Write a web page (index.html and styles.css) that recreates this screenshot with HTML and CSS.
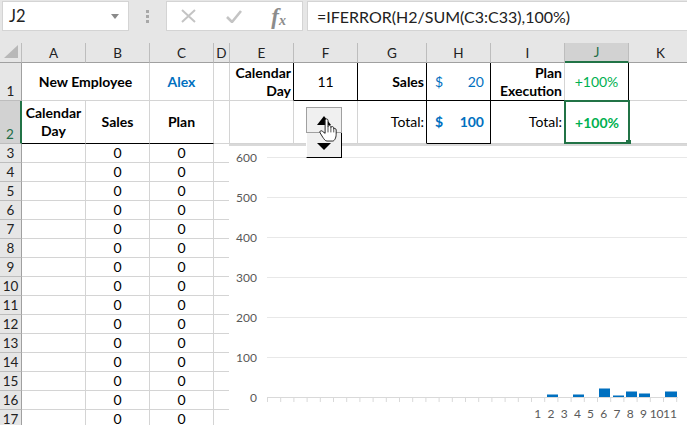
FILE: index.html
```html
<!DOCTYPE html>
<html lang="en">
<head>
<meta charset="utf-8">
<title>Sheet</title>
<link rel="stylesheet" href="styles.css">
</head>
<body>
<div class="app">
  <div class="fbar">
    <div class="namebox"><span>J2</span>
      <svg class="caret" width="8" height="5" viewBox="0 0 8 5"><path d="M0 0h8L4 5z" fill="#8a8a8a"/></svg>
    </div>
    <div class="grip"><i></i><i></i><i></i></div>
    <div class="fbtns">
      <svg width="15" height="14" viewBox="0 0 15 14"><path d="M1 1l13 12M14 1L1 13" stroke="#c4c4c4" stroke-width="2" fill="none"/></svg>
      <svg width="16" height="14" viewBox="0 0 16 14"><path d="M1 8l5 5L15 2" stroke="#c4c4c4" stroke-width="2.6" fill="none"/></svg>
      <span class="fx">f<sub>x</sub></span>
    </div>
    <div class="finput">=IFERROR(H2/SUM(C3:C33),100%)</div>
  </div>
  <div class="sheet">
    <div class="row hdr">
      <div class="corner"><svg width="14" height="13" viewBox="0 0 14 13"><path d="M14 0v13H0z" fill="#b8b8b8"/></svg></div>
      <div class="ch">A</div><div class="ch">B</div><div class="ch">C</div><div class="ch">D</div><div class="ch">E</div><div class="ch">F</div><div class="ch">G</div><div class="ch">H</div><div class="ch">I</div><div class="ch sel">J</div><div class="ch">K</div>
    </div>
    <div class="row r1">
      <div class="rh">1</div>
      <div class="c b mid span2">New Employee</div>
      <div class="c b mid blue">Alex</div>
      <div class="c"></div>
      <div class="c b right wrap rk">Calendar<br>Day</div>
      <div class="c mid bb">11</div>
      <div class="c b right mid bb rk lk">Sales</div>
      <div class="c money blue bb rk"><span>$</span><span>20</span></div>
      <div class="c b right wrap bb">Plan<br>Execution</div>
      <div class="c mid green bb rk">+100%</div>
      <div class="c"></div>
    </div>
    <div class="row r2">
      <div class="rh sel">2</div>
      <div class="c b mid wrap bb">Calendar<br>Day</div>
      <div class="c b mid bb">Sales</div>
      <div class="c b mid bb">Plan</div>
      <div class="c"></div>
      <div class="c"></div>
      <div class="c"></div>
      <div class="c right mid rk">Total:</div>
      <div class="c money blue b bb rk"><span>$</span><span>100</span></div>
      <div class="c right mid">Total:</div>
      <div class="c mid green b active">+100%</div>
      <div class="c"></div>
    </div>
    <div class="row"><div class="rh">3</div><div class="c"></div><div class="c z">0</div><div class="c z">0</div><div class="c"></div></div>
    <div class="row"><div class="rh">4</div><div class="c"></div><div class="c z">0</div><div class="c z">0</div><div class="c"></div></div>
    <div class="row"><div class="rh">5</div><div class="c"></div><div class="c z">0</div><div class="c z">0</div><div class="c"></div></div>
    <div class="row"><div class="rh">6</div><div class="c"></div><div class="c z">0</div><div class="c z">0</div><div class="c"></div></div>
    <div class="row"><div class="rh">7</div><div class="c"></div><div class="c z">0</div><div class="c z">0</div><div class="c"></div></div>
    <div class="row"><div class="rh">8</div><div class="c"></div><div class="c z">0</div><div class="c z">0</div><div class="c"></div></div>
    <div class="row"><div class="rh">9</div><div class="c"></div><div class="c z">0</div><div class="c z">0</div><div class="c"></div></div>
    <div class="row"><div class="rh">10</div><div class="c"></div><div class="c z">0</div><div class="c z">0</div><div class="c"></div></div>
    <div class="row"><div class="rh">11</div><div class="c"></div><div class="c z">0</div><div class="c z">0</div><div class="c"></div></div>
    <div class="row"><div class="rh">12</div><div class="c"></div><div class="c z">0</div><div class="c z">0</div><div class="c"></div></div>
    <div class="row"><div class="rh">13</div><div class="c"></div><div class="c z">0</div><div class="c z">0</div><div class="c"></div></div>
    <div class="row"><div class="rh">14</div><div class="c"></div><div class="c z">0</div><div class="c z">0</div><div class="c"></div></div>
    <div class="row"><div class="rh">15</div><div class="c"></div><div class="c z">0</div><div class="c z">0</div><div class="c"></div></div>
    <div class="row"><div class="rh">16</div><div class="c"></div><div class="c z">0</div><div class="c z">0</div><div class="c"></div></div>
    <div class="row"><div class="rh">17</div><div class="c"></div><div class="c z">0</div><div class="c z">0</div><div class="c"></div></div>

    <svg class="chart" width="458" height="281" viewBox="229 144 458 281">
      <rect x="229" y="144" width="458" height="2" fill="#d9d9d9"/>
      <g stroke="#e8e8e8" stroke-width="1">
        <path d="M267 157.500H687M267 197.500H687M267 237.500H687M267 277.500H687M267 317.500H687M267 357.500H687"/>
      </g>
      <path d="M267 397.500H678M267.500 397v5M280.700 397v5M293.900 397v5M307.100 397v5M320.300 397v5M333.500 397v5M346.700 397v5M359.900 397v5M373.100 397v5M386.300 397v5M399.500 397v5M412.700 397v5M425.900 397v5M439.100 397v5M452.300 397v5M465.500 397v5M478.700 397v5M491.900 397v5M505.100 397v5M518.300 397v5M531.500 397v5M544.700 397v5M557.900 397v5M571.100 397v5M584.300 397v5M597.500 397v5M610.700 397v5M623.900 397v5M637.100 397v5M650.300 397v5M663.500 397v5M676.700 397v5" stroke="#d9d9d9" fill="none"/>
      <g fill="#0070c0">
        <rect x="547" y="395" width="11" height="2"/>
        <rect x="573" y="395" width="11" height="2"/>
        <rect x="599" y="389" width="11" height="8"/>
        <rect x="613" y="396" width="11" height="1"/>
        <rect x="626" y="392" width="11" height="5"/>
        <rect x="639" y="394" width="11" height="3"/>
        <rect x="665" y="392" width="12" height="5"/>
      </g>
      <g fill="#7fb6dd">
        <rect x="547" y="394" width="11" height="1"/>
        <rect x="573" y="394" width="11" height="1"/>
        <rect x="599" y="388" width="11" height="1"/>
        <rect x="613" y="395" width="11" height="1"/>
        <rect x="626" y="391" width="11" height="1"/>
        <rect x="639" y="393" width="11" height="1"/>
        <rect x="665" y="391" width="12" height="1"/>
      </g>
      <g class="ytick" text-anchor="end">
        <text x="257" y="162">600</text><text x="257" y="202">500</text><text x="257" y="242">400</text><text x="257" y="282">300</text><text x="257" y="322">200</text><text x="257" y="362">100</text><text x="257" y="402">0</text>
      </g>
      <g class="ytick" text-anchor="middle">
        <text x="537.700" y="418">1</text><text x="551" y="418">2</text><text x="564.200" y="418">3</text><text x="577.400" y="418">4</text><text x="590.600" y="418">5</text><text x="603.800" y="418">6</text><text x="617" y="418">7</text><text x="630.200" y="418">8</text><text x="643.400" y="418">9</text><text x="656.600" y="418">10</text><text x="670" y="418">11</text>
      </g>
    </svg>

    <div class="spinner">
      <div class="spin up"><svg width="14" height="9" viewBox="0 0 14 9"><path d="M7 0l7 9H0z" fill="#000"/></svg></div>
      <div class="spin down"><svg width="14" height="7" viewBox="0 0 14 7"><path d="M0 0h14L7 7z" fill="#000"/></svg></div>
    </div>
    <svg class="hand" width="18" height="24" viewBox="0 0 18 25">
      <path d="M6 2.500c0-2 3-2 3 0V9c0-1.500 3-1.500 3 0v1c0-1.500 3-1.500 3 .5v1c0-1 2.500-1 2.500 1V17c0 4-2 7-3.500 7H8c-2 0-3-2-4.500-4L.8 15.500c-1-1.500.7-3 2.200-1.800L6 16z" fill="#fff" stroke="#222" stroke-width="1"/>
      <path d="M9 9v6M12 10v5M15 11v4" stroke="#222" stroke-width=".8" fill="none"/>
    </svg>
  </div>
</div>
</body>
</html>
```
FILE: styles.css
```css
* { box-sizing: border-box; }
html, body { margin: 0; padding: 0; }
body { width: 687px; height: 425px; overflow: hidden; background: #fff; font-family: "Lato", "Liberation Sans", sans-serif; font-size: 14px; color: #000; }
.app { width: 687px; height: 425px; overflow: hidden; display: flex; flex-direction: column; }

.fbar { height: 43px; flex: none; background: #e6e6e6; display: flex; align-items: flex-start; padding: 1px 0 0 2px; }
.namebox { width: 127px; height: 30px; background: #fff; border: 1px solid #d4d4d4; display: flex; align-items: center; justify-content: space-between; padding: 0 9px 0 6px; font-size: 16.500px; color: #222; }
.grip { width: 37px; height: 30px; display: flex; flex-direction: column; align-items: center; justify-content: center; gap: 2px; }
.grip i { display: block; width: 3px; height: 3px; background: #a8a8a8; }
.fbtns { width: 137px; height: 30px; background: #fff; border: 1px solid #d4d4d4; display: flex; align-items: center; justify-content: space-between; padding: 0 16px 0 14px; }
.fx { font-family: "Liberation Serif", serif; font-style: italic; font-weight: 700; font-size: 23px; color: #8c8c8c; line-height: 1; }
.fx sub { font-size: 14px; vertical-align: -1px; line-height: 0; }
.finput { flex: 1; height: 30px; margin-left: 4px; background: #fff; border: 1px solid #d4d4d4; border-right: 0; display: flex; align-items: center; padding-left: 9px; font-size: 16px; color: #222; white-space: nowrap; }

.sheet { position: relative; flex: 1; overflow: hidden; }
.row { display: grid; grid-template-columns: 22px 64px 64px 64px 16px 64px 64px 69px 64px 74px 64px 64px; height: 19px; width: 713px; }
.row.hdr { height: 20px; }
.row.r1 { height: 38px; }
.row.r2 { height: 43px; }

.corner { background: #e6e6e6; border-bottom: 1px solid #a0a0a0; border-right: 1px solid #bdbdbd; display: flex; align-items: flex-end; justify-content: flex-end; padding: 0 3px 4px 0; }
.ch { background: #e6e6e6; border-bottom: 1px solid #a0a0a0; border-right: 1px solid #bdbdbd; display: flex; align-items: center; justify-content: center; font-size: 13.500px; color: #222; }
.ch.sel { background: #d2d2d2; color: #1f6d46; border-bottom: 2px solid #217346; }
.rh { background: #e6e6e6; border-right: 1px solid #a0a0a0; border-bottom: 1px solid #bdbdbd; display: flex; align-items: flex-end; justify-content: center; font-size: 13.500px; line-height: 17px; color: #222; }
.rh.sel { background: #d2d2d2; color: #1f6d46; border-right: 2px solid #217346; }

.c { border-right: 1px solid #d4d4d4; border-bottom: 1px solid #d4d4d4; display: flex; align-items: flex-end; line-height: 18px; min-width: 0; white-space: nowrap; }
.z { justify-content: center; }
.b { font-weight: 700; }
.mid { align-items: center; justify-content: center; text-align: center; }
.right { justify-content: flex-end; text-align: right; padding-right: 2px; }
.right.mid { justify-content: flex-end; }
.wrap { align-items: center; }
.span2 { grid-column: span 2; }
.blue { color: #0070c0; }
.green { color: #00b050; }
.bb { border-bottom-color: #000; }
.rk { border-right-color: #000; }
.lk { box-shadow: -1px 0 0 #000; }
.money { align-items: center; justify-content: space-between; padding: 0 6px 0 8px; }
.active { border: 0; position: relative; }
.active::before { content: ""; position: absolute; left: -1px; right: -1px; top: -1px; bottom: 0; border: 2px solid #217346; }
.active::after { content: ""; position: absolute; right: -2px; bottom: 0; width: 5px; height: 4px; background: #217346; }

.chart { position: absolute; left: 229px; top: 101px; background: #fff; }
.ytick text { font-size: 12px; fill: #595959; font-family: "Lato", "Liberation Sans", sans-serif; }

.spinner { position: absolute; left: 306px; top: 64px; width: 36px; display: flex; flex-direction: column; }
.spin { height: 26px; background: #f0f0f0; display: flex; align-items: center; justify-content: center; }
.spin.up { border: 1px solid #a0a0a0; }
.spin.down { height: 25px; padding-top: 2px; border-right: 1px solid #000; border-bottom: 1px solid #000; border-left: 1px solid #fff; }
.hand { position: absolute; left: 319px; top: 75px; }
```
